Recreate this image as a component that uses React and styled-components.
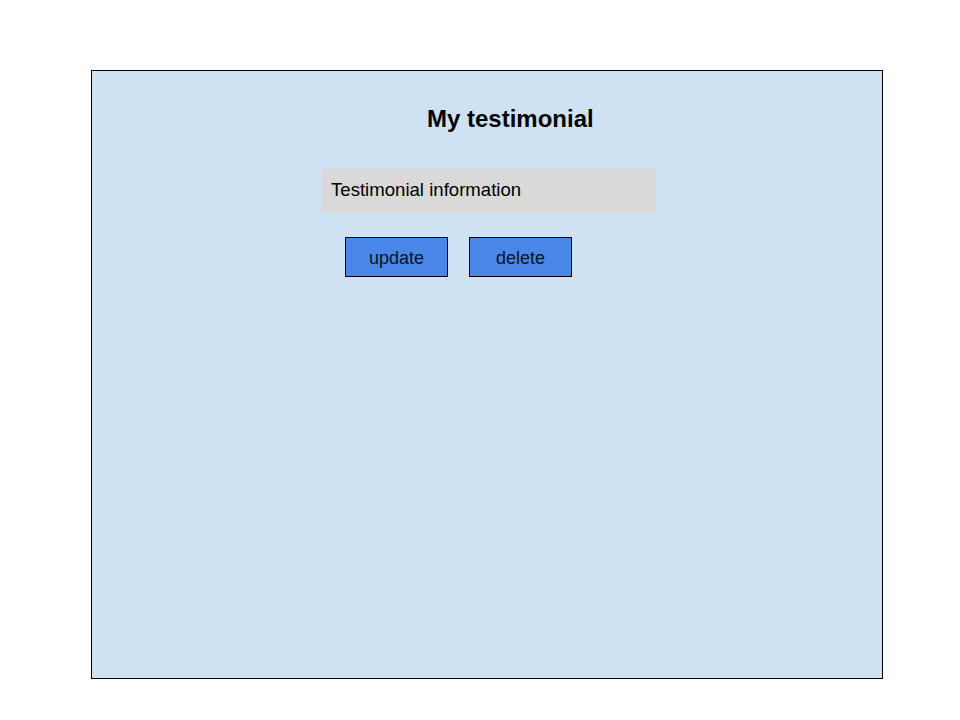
import styled, { createGlobalStyle } from 'styled-components';

const GlobalStyle = createGlobalStyle`
  body {
    margin: 0;
    background: #ffffff;
    font-family: 'Liberation Sans', Arial, sans-serif;
  }
`;

const Page = styled.div`
  width: 960px;
  height: 720px;
  padding: 70px 0 0 91px;
  box-sizing: border-box;
`;

const Frame = styled.div`
  width: 792px;
  height: 609px;
  box-sizing: border-box;
  border: 1px solid #000000;
  background: #cfe2f3;
  display: flex;
  flex-direction: column;
  align-items: flex-start;
  padding-top: 34px;
`;

const Title = styled.h1`
  margin: 0 0 0 335px;
  font-size: 24px;
  line-height: 28px;
  font-weight: 700;
  color: #000000;
`;

const InfoBox = styled.div`
  margin: 36px 0 0 230px;
  width: 333px;
  height: 44px;
  box-sizing: border-box;
  padding: 10px 0 0 9px;
  background: #d9d9d9;
  font-size: 18.6px;
  line-height: 22px;
  color: #000000;
`;

const Actions = styled.div`
  display: flex;
  gap: 21px;
  margin: 24px 0 0 253px;
`;

const ActionButton = styled.button`
  width: 103px;
  height: 40px;
  box-sizing: border-box;
  border: 1px solid #000000;
  background: #4a86e8;
  color: #0a1128;
  font-family: 'Liberation Sans', Arial, sans-serif;
  font-size: 18px;
  padding: 3px 0 0;
  border-radius: 0;
  cursor: pointer;
`;

export default function App() {
  return (
    <>
      <GlobalStyle />
      <Page>
        <Frame>
          <Title>My testimonial</Title>
          <InfoBox>Testimonial information</InfoBox>
          <Actions>
            <ActionButton type="button">update</ActionButton>
            <ActionButton type="button">delete</ActionButton>
          </Actions>
        </Frame>
      </Page>
    </>
  );
}
